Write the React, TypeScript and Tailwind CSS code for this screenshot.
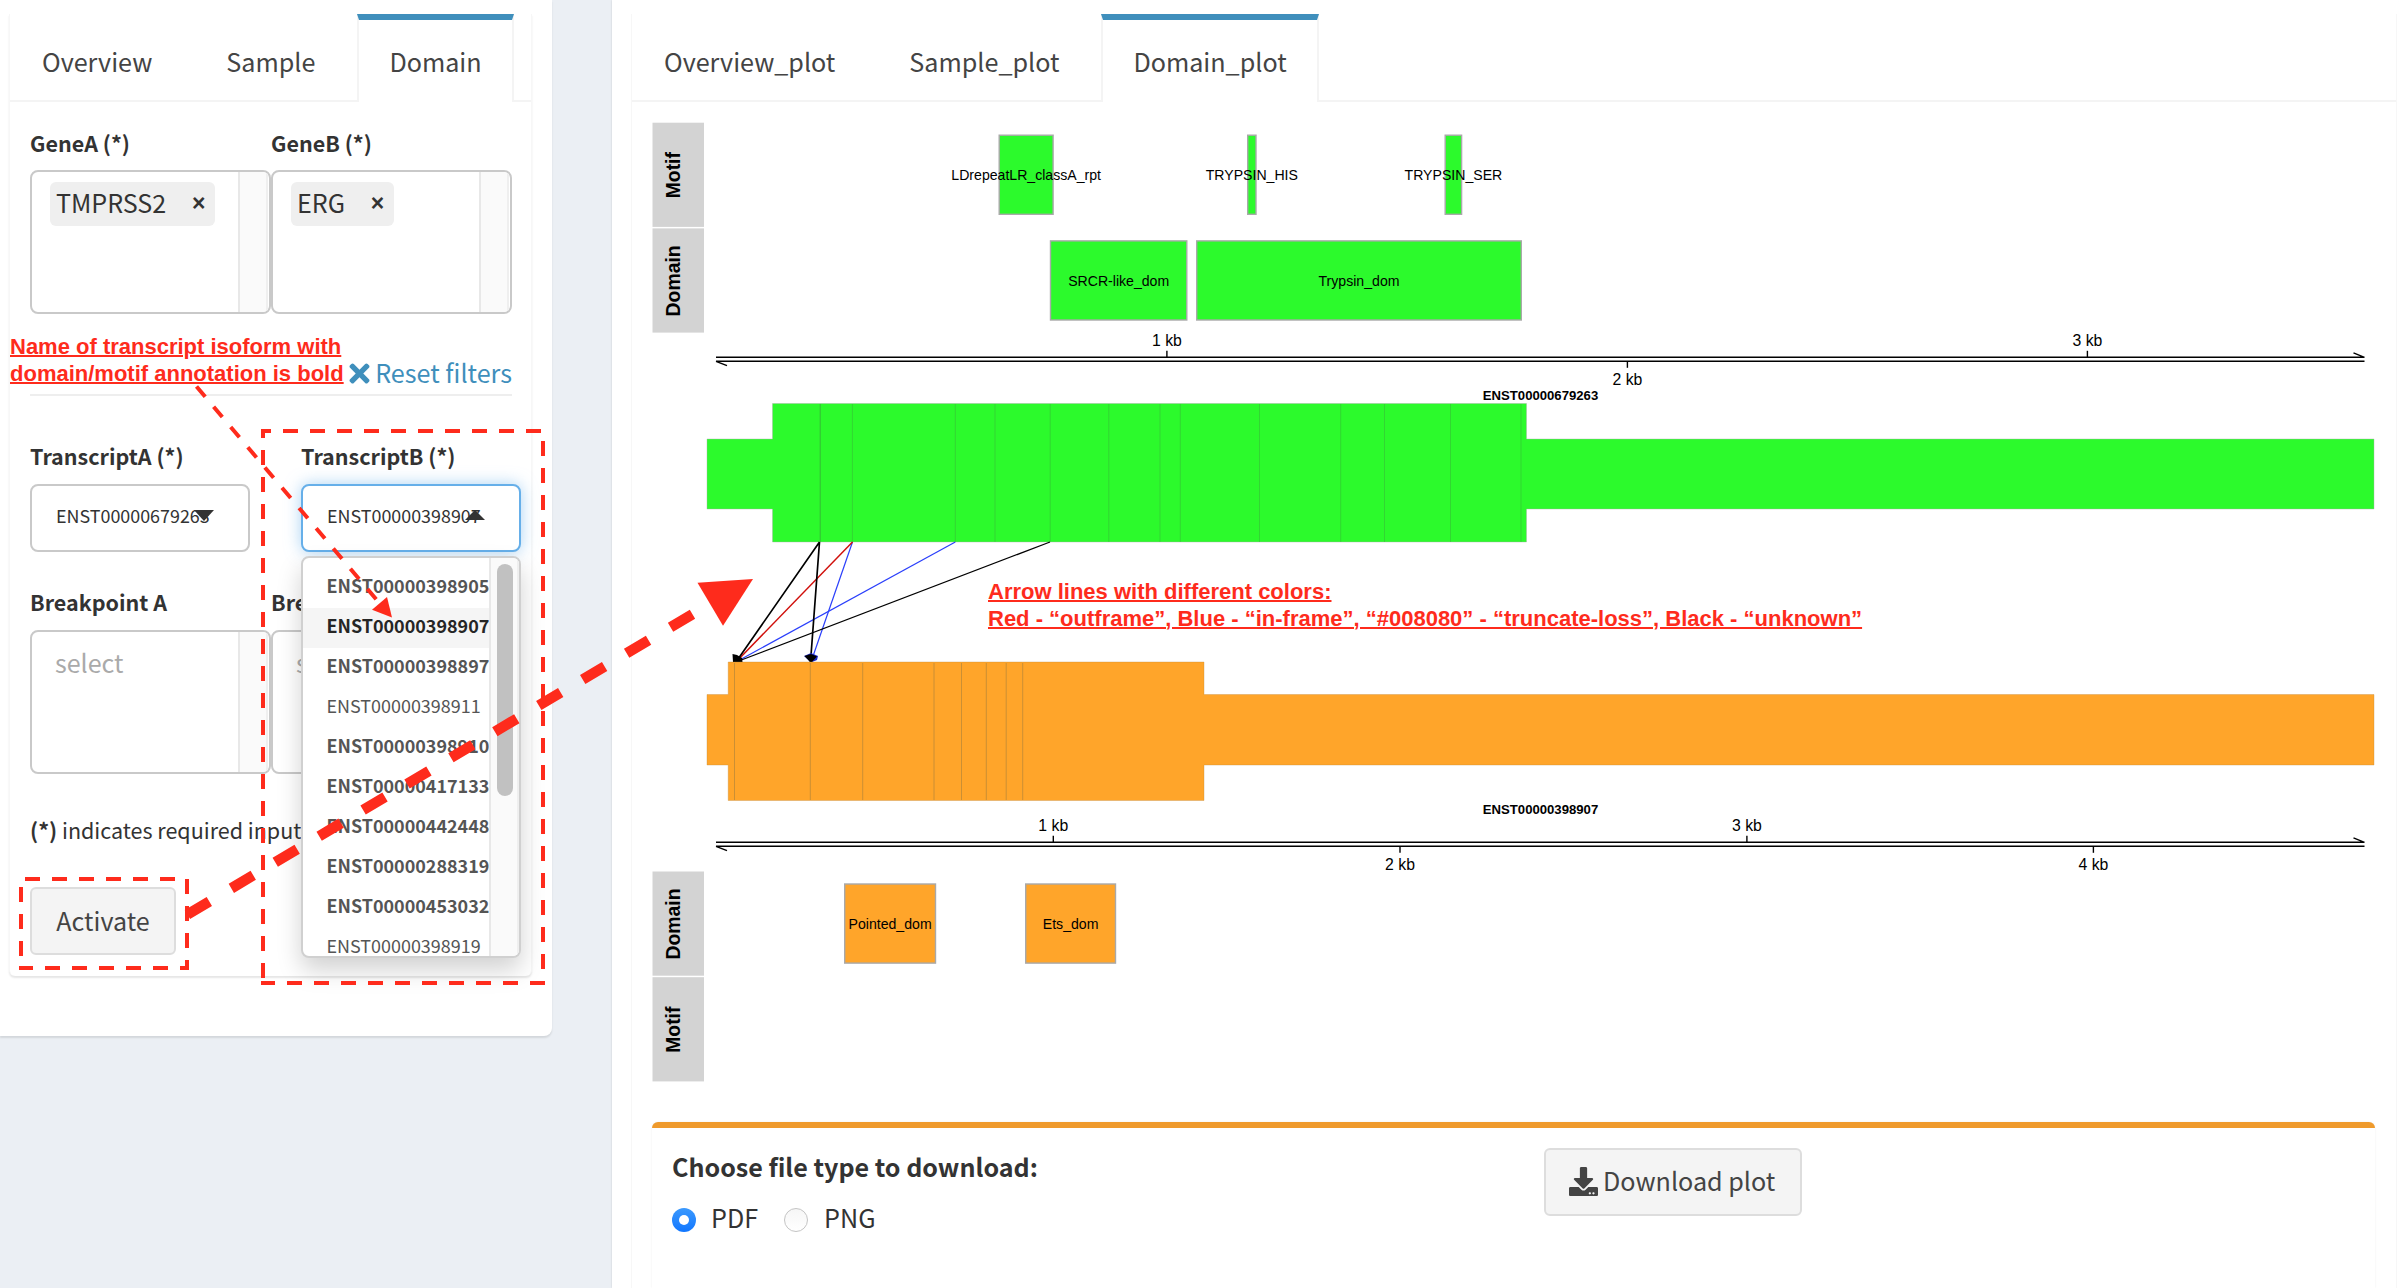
import React from "react";
import { FaDownload, FaTimes } from "react-icons/fa";

const GREEN = "#2cfa2c";
const ORANGE = "#ffa52a";
const RED = "#fe2b1c";

const transcripts = [
  { id: "ENST00000398905", bold: true },
  { id: "ENST00000398907", bold: true, active: true },
  { id: "ENST00000398897", bold: true },
  { id: "ENST00000398911", bold: false },
  { id: "ENST00000398910", bold: true },
  { id: "ENST00000417133", bold: true },
  { id: "ENST00000442448", bold: true },
  { id: "ENST00000288319", bold: true },
  { id: "ENST00000453032", bold: true },
  { id: "ENST00000398919", bold: false },
];

function Tabs({ items }: { items: string[] }) {
  return (
    <div className="flex h-[88px] gap-[10px] border-b-2 border-[#f4f4f4] text-[25.15px] text-[#444]">
      {items.map((label, i) =>
        i === items.length - 1 ? (
          <div
            key={label}
            className="relative flex h-[88px] flex-none items-center border-x-2 border-t-[6px] border-x-[#f4f4f4] border-t-[#3f8fbc] bg-white px-[30px] pt-0.5"
          >
            {label}
          </div>
        ) : (
          <div key={label} className="flex h-[88px] flex-none items-center border-t-[6px] border-transparent px-8 pt-0.5">
            {label}
          </div>
        ),
      )}
    </div>
  );
}

function Label({ children }: { children: React.ReactNode }) {
  return <div className="h-[30px] text-[21.5px] leading-[30px] font-bold whitespace-nowrap text-[#333]">{children}</div>;
}

function MultiSelect({ value }: { value?: string }) {
  return (
    <div className="flex h-36 w-[241px] overflow-hidden rounded-lg border-2 border-[#c9c9c9] bg-white">
      <div className="flex-1 pt-[10px] pl-[18px]">
        {value ? (
          <div className="flex h-11 w-fit items-center rounded-md bg-[#efefef] pr-[10px] pl-[6px] text-[25.07px] text-[#333]">
            <span className="-mt-0.5">{value}</span>
            <span className="-mt-px ml-[26px] flex w-[13px] justify-center font-['Liberation_Sans',sans-serif] text-[23px] font-bold">
              ×
            </span>
          </div>
        ) : (
          <div className="flex h-11 items-center pb-0.5 pl-[5px] text-[25.07px] text-[#aaa]">select</div>
        )}
      </div>
      <div className="mr-px w-[30px] border-x-2 border-l-[#e8e8e8] border-r-[#efefef] bg-[#fafafa]" />
    </div>
  );
}

function Dropdown() {
  return (
    <div className="absolute top-[72px] left-0 z-10 flex h-[402px] w-[220px] overflow-hidden rounded-lg border-2 border-[#d0d0d0] bg-white shadow-[0_12px_24px_rgba(0,0,0,0.18)]">
      <div className="w-[186px] flex-none pt-[10px]">
        {transcripts.map((t) => (
          <div
            key={t.id}
            className={
              "h-10 pl-[23.5px] text-[17.95px] leading-[35px] whitespace-nowrap " +
              (t.active ? "bg-[#f5f5f5] text-[#262626] " : "text-[#555] ") +
              (t.bold ? "font-bold" : "")
            }
          >
            {t.id}
          </div>
        ))}
      </div>
      <div className="w-[30px] flex-none border-x-2 border-l-[#e8e8e8] border-r-[#efefef] bg-[#fafafa] pt-[6px] pl-[6px]">
        <div className="h-[232px] w-4 rounded-full bg-[#c1c1c1]" />
      </div>
    </div>
  );
}

function SingleSelect({ value, open }: { value: string; open?: boolean }) {
  return (
    <div className="relative w-[220px]">
      <div
        className={
          "flex h-[68px] items-center rounded-lg border-2 bg-white pb-[5px] pl-6 text-[17.9px] text-[#333] " +
          (open ? "border-[#66afe9] shadow-[0_0_16px_rgba(102,175,233,0.55)]" : "border-[#c9c9c9]")
        }
      >
        <span>{value}</span>
        <svg className="-ml-[16px] h-[11px] w-5" viewBox="0 0 20 11">
          <path d={open ? "M0 10L10 0L20 10Z" : "M0 0H20L10 11Z"} fill="#333" />
        </svg>
      </div>
      {open && <Dropdown />}
    </div>
  );
}

function FilterPanel() {
  return (
    <section className="h-[1036px] w-[552px] flex-none rounded-br-lg bg-white pt-[14px] pl-[9px] shadow-[0_2px_2px_rgba(0,0,0,0.1)]">
      <div className="h-[962px] w-[523px] rounded-b-md border-x border-[#f7f7f7] bg-white shadow-[0_2px_2px_rgba(0,0,0,0.1)]">
        <Tabs items={["Overview", "Sample", "Domain"]} />
        <div className="px-5 pt-[26px]">
          <div className="flex">
            {[
              ["GeneA (*)", "TMPRSS2"],
              ["GeneB (*)", "ERG"],
            ].map(([label, value]) => (
              <div key={label} className="flex w-[241px] flex-none flex-col gap-3">
                <Label>{label}</Label>
                <MultiSelect value={value} />
              </div>
            ))}
          </div>
          <div className="mt-[38px] flex h-[42px] w-[482px] items-center justify-end gap-[5px] text-[25.15px] text-[#3f8fbc]">
            <FaTimes className="h-[29px] w-[21px]" />
            <span>Reset filters</span>
          </div>
          <div className="h-0.5 w-[482px] bg-[#eee]" />
          <div className="flex gap-[51px] pt-[45px]">
            <div className="flex flex-col gap-[13px]">
              <Label>TranscriptA (*)</Label>
              <SingleSelect value="ENST00000679263" />
            </div>
            <div className="flex flex-col gap-[13px]">
              <Label>TranscriptB (*)</Label>
              <SingleSelect value="ENST00000398907" open />
            </div>
          </div>
          <div className="mt-[35px] flex">
            {["Breakpoint A", "Breakpoint B"].map((label) => (
              <div key={label} className="flex w-[241px] flex-none flex-col gap-[13px]">
                <Label>{label}</Label>
                <MultiSelect />
              </div>
            ))}
          </div>
          <div className="mt-[41px] h-[30px] text-[21.5px] leading-[30px] text-[#333]">
            <b>(*)</b> indicates required input
          </div>
          <button className="mt-[42px] flex h-[68px] w-[146px] items-center justify-center rounded-md border-2 border-[#ddd] bg-[#f4f4f4] pb-px text-[25.07px] text-[#444]">
            Activate
          </button>
        </div>
      </div>
    </section>
  );
}

function TrackTitle({ y, label }: { y: number; label: string }) {
  return (
    <g>
      <rect x={652.5} y={y} width={51.5} height={104.2} fill="#d3d3d3" />
      <text
        transform={`translate(680 ${y + 52.5}) rotate(-90)`}
        textAnchor="middle"
        className="text-[19.4px] font-bold"
      >
        {label}
      </text>
    </g>
  );
}

function Feature(p: { x1: number; x2: number; y: number; fill: string; label: string }) {
  return (
    <g>
      <rect
        x={p.x1 + 0.7}
        y={p.y + 0.7}
        width={p.x2 - p.x1 - 1.4}
        height={79.1}
        fill={p.fill}
        stroke="#a9a9a9"
        strokeWidth={1.4}
      />
      <text x={(p.x1 + p.x2) / 2} y={p.y + 45.5} textAnchor="middle" className="text-[14.1px]">
        {p.label}
      </text>
    </g>
  );
}

function Axis({ y, ticks }: { y: number; ticks: number[] }) {
  return (
    <g stroke="#000" strokeWidth={1.4}>
      <path d={`M716 ${y}H2364.5M716 ${y + 4}H2364.5M716 ${y + 4}l11 4.4M2364.5 ${y}l-11 -4.4`} fill="none" />
      {ticks.map((x, i) => {
        const up = i % 2 === 0;
        return (
          <g key={x}>
            <path d={up ? `M${x} ${y}v-6.5` : `M${x} ${y + 4}v6.5`} />
            <text x={x} y={up ? y - 11.5 : y + 28} textAnchor="middle" stroke="none" className="text-[15.8px]">
              {i + 1} kb
            </text>
          </g>
        );
      })}
    </g>
  );
}

const exonsA = [820.2, 852.4, 955.3, 995, 1050.2, 1108.8, 1160, 1180.3, 1259.5, 1340.7, 1384.5, 1450.5, 1521];
const exonsB = [734.5, 810.3, 862.7, 934, 961.5, 986.3, 1006.2, 1022.7];

function DomainPlot() {
  return (
    <svg
      className="block h-[1020px] w-[1723px] font-['Liberation_Sans',Arial,sans-serif]"
      viewBox="652 102 1723 1020"
    >
      <TrackTitle y={122.7} label="Motif" />
      <TrackTitle y={228.4} label="Domain" />
      <Feature x1={998.5} x2={1053.8} y={134.5} fill={GREEN} label="LDrepeatLR_classA_rpt" />
      <Feature x1={1247} x2={1256.7} y={134.5} fill={GREEN} label="TRYPSIN_HIS" />
      <Feature x1={1444.5} x2={1462.3} y={134.5} fill={GREEN} label="TRYPSIN_SER" />
      <Feature x1={1049.8} x2={1187.5} y={240.2} fill={GREEN} label="SRCR-like_dom" />
      <Feature x1={1196} x2={1522} y={240.2} fill={GREEN} label="Trypsin_dom" />
      <Axis y={357.3} ticks={[1166.9, 1627.4, 2087.4]} />

      <text x={1540.5} y={399.7} textAnchor="middle" className="text-[13.15px] font-bold">
        ENST00000679263
      </text>
      <path
        d="M707 439H772.5V403.5H1526.5V439H2374V509H1526.5V542H772.5V509H707Z"
        fill={GREEN}
        stroke="#a9a9a9"
        strokeOpacity={0.4}
      />
      {exonsA.map((x, i) => (
        <path key={x} d={`M${x} 404V542`} stroke="#3b9f3b" strokeOpacity={i === 0 ? 0.7 : 0.4} />
      ))}

      <g fill="none" strokeWidth={1.2}>
        <path d="M955.3 542L736 662" stroke="#2a3ffb" />
        <path d="M852.5 542L811 662" stroke="#2a3ffb" />
        <path d="M1050 542L736 662" stroke="#000" />
        <path d="M852.5 542L736 662" stroke="#d0100c" strokeWidth={1.5} />
        <path d="M819.5 542L736 662M819.5 542L810.5 662" stroke="#000" strokeWidth={1.7} />
      </g>
      <path d="M804 656L811 653L818 656L817 660L811 662.5Z" fill="#1c28c8" />
      <path d="M804.5 656L811 654L817 656.5L811 663Z" fill="#000" />
      <path d="M732.5 654L737 655L742 658L742.5 662H733Z" fill="#000" />

      <path
        d="M707 694.5H728.2V662H1204V694.5H2374V765H1204V800.5H728.2V765H707Z"
        fill={ORANGE}
        stroke="#c08a3c"
        strokeOpacity={0.35}
      />
      {exonsB.map((x) => (
        <path key={x} d={`M${x} 663V800`} stroke="#a9803c" strokeOpacity={0.6} />
      ))}
      <text x={1540.5} y={814.3} textAnchor="middle" className="text-[13.15px] font-bold">
        ENST00000398907
      </text>

      <Axis y={842.3} ticks={[1053.3, 1400, 1746.9, 2093.4]} />
      <TrackTitle y={871.5} label="Domain" />
      <TrackTitle y={977.2} label="Motif" />
      <Feature x1={844} x2={936.2} y={883.3} fill={ORANGE} label="Pointed_dom" />
      <Feature x1={1025} x2={1116.2} y={883.3} fill={ORANGE} label="Ets_dom" />
    </svg>
  );
}

function DownloadBox() {
  return (
    <div className="flex h-[166px] w-[1723px] rounded-t-md border-t-[6px] border-[#ef9a2c] bg-white pl-5 shadow-[0_0_2px_rgba(0,0,0,0.08)] text-[#333]">
      <div className="w-[872px] flex-none pt-[19px]">
        <div className="h-[38px] text-[25.07px] leading-[38px] font-bold">Choose file type to download:</div>
        <div className="mt-[12px] flex h-[44px] items-center text-[25.15px]">
          <span className="mt-0.5 flex size-6 items-center justify-center rounded-full bg-linear-to-b from-[#3b99fd] to-[#0f76ff]">
            <span className="size-[10px] rounded-full bg-white" />
          </span>
          <span className="-mt-0.5 ml-[15px]">PDF</span>
          <span className="mt-0.5 ml-[26px] size-6 rounded-full border border-[#c4c4c4] bg-linear-to-b from-[#f6f6f6] to-white" />
          <span className="-mt-0.5 ml-4">PNG</span>
        </div>
      </div>
      <button className="mt-5 flex h-[68px] w-[258px] items-center rounded-md border-2 border-[#ddd] bg-[#f4f4f4] pl-[23px] text-[25.15px] text-[#444]">
        <FaDownload className="mb-0.5 size-[29px]" />
        <span className="-mt-0.5 ml-[5px] whitespace-nowrap">Download plot</span>
      </button>
    </div>
  );
}

function Annotations() {
  return (
    <>
      <p className="absolute top-[334px] left-[10px] z-20 font-['Liberation_Sans',Arial,sans-serif] text-[22px] leading-[26.5px] font-bold whitespace-nowrap text-[#fe2b1c] underline decoration-2">
        Name of transcript isoform with
        <br />
        domain/motif annotation is bold
      </p>
      <p className="absolute top-[579px] left-[988px] z-20 font-['Liberation_Sans',Arial,sans-serif] text-[22px] leading-[26.5px] font-bold whitespace-nowrap text-[#fe2b1c] underline decoration-2">
        Arrow lines with different colors:
        <br />
        Red - “outframe”, Blue - “in-frame”, “#008080” - “truncate-loss”, Black - “unknown”
      </p>
      <svg
        className="pointer-events-none absolute top-0 left-0 z-20 h-[1288px] w-[800px]"
        viewBox="0 0 800 1288"
        fill="none"
        stroke={RED}
        strokeWidth={4}
      >
        <g strokeDasharray="15 12">
          <path d="M261 431H541" strokeDashoffset={5} />
          <path d="M543 441V985" />
          <path d="M263 429V980" strokeDashoffset={6} />
          <path d="M261 983H545" strokeDashoffset={1} />
          <path d="M25 879H176" />
          <path d="M187 879V970" />
          <path d="M19 968H189" strokeDashoffset={1} />
          <path d="M21 887V957" />
        </g>
        <path d="M196.5 386.5L381 605" strokeDasharray="13.5 13" />
        <path d="M392 617.5L372 609.7L387 597Z" fill={RED} stroke="none" />
        <path d="M187.4 914.5L697 611.5" strokeWidth={10.5} strokeDasharray="25.5 25.6" />
        <path d="M753 579L697.5 582.8L723 625.8Z" fill={RED} stroke="none" />
      </svg>
    </>
  );
}

export default function App() {
  return (
    <main className="relative flex h-[1288px] w-[2406px] justify-between overflow-hidden bg-[#ebeff4] font-['Noto_Sans_CJK_SC',sans-serif]">
      <FilterPanel />
      <section className="h-full w-[1794px] flex-none bg-white pt-[14px] pl-[19px] shadow-[0_0_2px_rgba(0,0,0,0.15)]">
        <div className="h-full w-[1766px] border-x border-[#f7f7f7]">
          <Tabs items={["Overview_plot", "Sample_plot", "Domain_plot"]} />
          <div className="pl-5">
            <DomainPlot />
            <DownloadBox />
          </div>
        </div>
      </section>
      <Annotations />
    </main>
  );
}
